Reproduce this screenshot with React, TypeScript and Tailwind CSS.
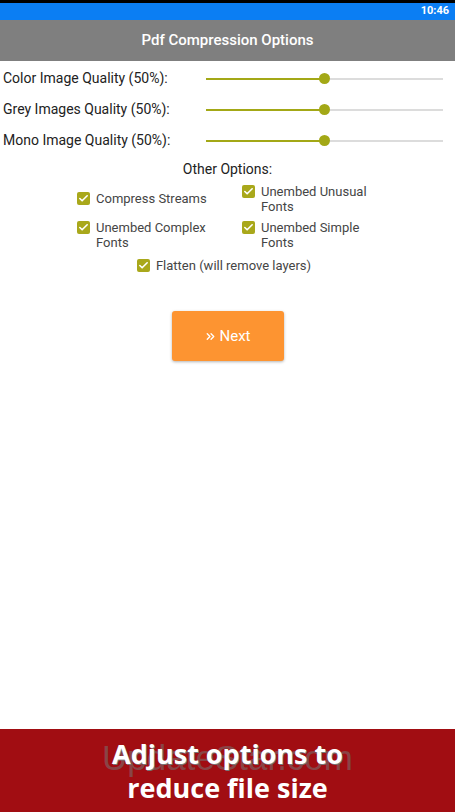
import { Check, ChevronsRight } from 'lucide-react';

const sliders = ['Color Image Quality (50%):', 'Grey Images Quality (50%):', 'Mono Image Quality (50%):'];

function Slider() {
  return (
    <div className="relative h-[12px] w-[237px] flex items-center">
      <div className="h-[2px] w-full bg-[#dcdcdc]" />
      <div className="absolute left-0 h-[2px] w-[118px] bg-[#a3a816]" />
      <div className="absolute left-[113px] h-[11px] w-[11px] rounded-full bg-[#a3a816]" />
    </div>
  );
}

function Option({ label }: { label: React.ReactNode }) {
  return (
    <div className="flex items-start gap-[6px]">
      <div className="mt-[1px] flex h-[13px] w-[13px] shrink-0 items-center justify-center rounded-[2px] bg-[#a9a81b]">
        <Check className="h-[11px] w-[11px] text-white" strokeWidth={3.5} />
      </div>
      <span className="text-[13px] leading-[15px] text-[#454545]">{label}</span>
    </div>
  );
}

export default function App() {
  return (
    <div className="flex h-[812px] w-[455px] flex-col bg-white font-['Roboto',sans-serif]">
      <div className="h-[3px] bg-black" />
      <div className="flex h-[17px] items-center justify-end bg-[#0b7ef3] pr-[6px]">
        <span className="text-[11px] font-bold text-white">10:46</span>
      </div>
      <div className="flex h-[41px] items-center justify-center bg-[#7f7f7f]">
        <span className="text-[15px] font-medium text-white">Pdf Compression Options</span>
      </div>

      <div className="mt-[8px] flex flex-col gap-[12px] pl-[3px]">
        {sliders.map((s) => (
          <div key={s} className="flex h-[19px] items-center">
            <span className="w-[203px] text-[14px] text-[#222]">{s}</span>
            <Slider />
          </div>
        ))}
      </div>

      <div className="mt-[9px] text-center text-[14px] text-[#222]">Other Options:</div>

      <div className="mt-[4px] ml-[77px] grid w-[300px] grid-cols-[165px_135px] gap-y-[6px]">
        <div className="pt-[7px]"><Option label="Compress Streams" /></div>
        <Option label={<>Unembed Unusual<br />Fonts</>} />
        <Option label={<>Unembed Complex<br />Fonts</>} />
        <Option label={<>Unembed Simple<br />Fonts</>} />
      </div>
      <div className="mt-[8px] flex justify-center pr-[7px]">
        <Option label="Flatten (will remove layers)" />
      </div>

      <div className="mt-[38px] flex justify-center">
        <button className="flex h-[50px] w-[112px] items-center justify-center gap-[2px] rounded-[3px] bg-[#fd9431] text-[15px] text-white shadow-[0_1px_3px_rgba(0,0,0,0.3)]">
          <ChevronsRight className="h-[13px] w-[13px]" strokeWidth={2.5} />
          Next
        </button>
      </div>

      <div className="flex-1" />

      <div className="relative flex h-[83px] flex-col items-center justify-center bg-[#a10d12]">
        <span className="absolute top-[3px] text-[35px] text-[#7a6a6a]/60 font-['Liberation_Sans',sans-serif]">UpdateStar.com</span>
        <span className="relative text-[27px] font-bold leading-[34px] text-white [text-shadow:1px_1px_0_#777] font-['Open_Sans',sans-serif]">Adjust options to</span>
        <span className="relative text-[27px] font-bold leading-[34px] text-white font-['Open_Sans',sans-serif]">reduce file size</span>
      </div>
    </div>
  );
}
